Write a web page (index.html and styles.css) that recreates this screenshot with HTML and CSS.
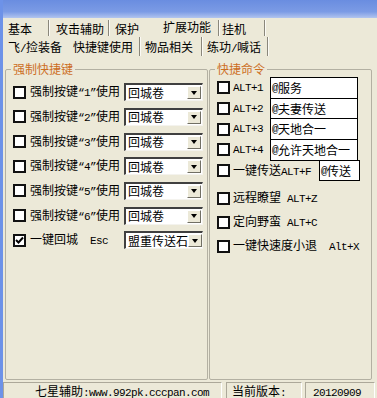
FILE: index.html
```html
<!DOCTYPE html>
<html lang="zh">
<head>
    <meta charset="UTF-8">
    <title>快捷键使用</title>
    <link rel="stylesheet" href="styles.css">
</head>
<body>
    <div class="window">
        <div class="titlebar"></div>
        <div class="tabs">
            <div class="tab-row row1">
                <span class="tab sep tab-basic">基本</span>
                <span class="tab sep tab-attack">攻击辅助</span>
                <span class="tab tab-protect">保护</span>
                <span class="tab sep tab-ext raised">扩展功能</span>
                <span class="tab sep tab-hang">挂机</span>
            </div>
            <div class="tab-row row2">
                <span class="tab tab-fly">飞<span class="en">/</span>捡装备</span>
                <span class="tab sep tab-keys active">快捷键使用</span>
                <span class="tab sep tab-items">物品相关</span>
                <span class="tab sep tab-train">练功<span class="en">/</span>喊话</span>
            </div>
        </div>

        <div class="panel">
            <fieldset class="group group-keys">
                <legend>强制快捷键</legend>
                <div class="key-list">
                    <div class="key-row"><span class="check"></span><span class="key-label">强制按键<span class="en">“1”</span>使用</span><div class="combo"><span class="combo-text">回城卷</span><span class="combo-btn"></span></div></div>
                    <div class="key-row"><span class="check"></span><span class="key-label">强制按键<span class="en">“2”</span>使用</span><div class="combo"><span class="combo-text">回城卷</span><span class="combo-btn"></span></div></div>
                    <div class="key-row"><span class="check"></span><span class="key-label">强制按键<span class="en">“3”</span>使用</span><div class="combo"><span class="combo-text">回城卷</span><span class="combo-btn"></span></div></div>
                    <div class="key-row"><span class="check"></span><span class="key-label">强制按键<span class="en">“4”</span>使用</span><div class="combo"><span class="combo-text">回城卷</span><span class="combo-btn"></span></div></div>
                    <div class="key-row"><span class="check"></span><span class="key-label">强制按键<span class="en">“5”</span>使用</span><div class="combo"><span class="combo-text">回城卷</span><span class="combo-btn"></span></div></div>
                    <div class="key-row"><span class="check"></span><span class="key-label">强制按键<span class="en">“6”</span>使用</span><div class="combo"><span class="combo-text">回城卷</span><span class="combo-btn"></span></div></div>
                    <div class="key-row">
                        <span class="check checked"><svg width="9" height="9" viewBox="0 0 9 9"><polyline points="1,4 3.5,6.5 8,1.5" fill="none" stroke="#000" stroke-width="2"/></svg></span>
                        <span class="key-label">一键回城<span class="en">  Esc</span></span>
                        <div class="combo"><span class="combo-text">盟重传送石</span><span class="combo-btn"></span></div>
                    </div>
                </div>
            </fieldset>

            <fieldset class="group group-cmds">
                <legend>快捷命令</legend>
                <div class="cmd-list">
                    <div class="cmd-row"><span class="check"></span><span class="cmd-label en">ALT+1</span><span class="cmd-box"><span class="en">@</span>服务</span></div>
                    <div class="cmd-row"><span class="check"></span><span class="cmd-label en">ALT+2</span><span class="cmd-box"><span class="en">@</span>夫妻传送</span></div>
                    <div class="cmd-row"><span class="check"></span><span class="cmd-label en">ALT+3</span><span class="cmd-box"><span class="en">@</span>天地合一</span></div>
                    <div class="cmd-row"><span class="check"></span><span class="cmd-label en">ALT+4</span><span class="cmd-box"><span class="en">@</span>允许天地合一</span></div>
                    <div class="cmd-row"><span class="check"></span><span class="cmd-label wide">一键传送<span class="en">ALT+F</span></span><span class="cmd-box small"><span class="en">@</span>传送</span></div>
                </div>
                <div class="opt-list">
                    <div class="opt-row"><span class="check"></span><span>远程瞭望<span class="en"> ALT+Z</span></span></div>
                    <div class="opt-row"><span class="check"></span><span>定向野蛮<span class="en"> ALT+C</span></span></div>
                    <div class="opt-row"><span class="check"></span><span>一键快速度小退<span class="en">  Alt+X</span></span></div>
                </div>
            </fieldset>
        </div>

        <div class="statusbar">
            <div class="status-cell cell-site">七星辅助<span class="en">:www.992pk.cccpan.com</span></div>
            <div class="status-cell cell-label">当前版本<span class="en">:</span></div>
            <div class="status-cell cell-ver"><span class="en">20120909</span></div>
        </div>
    </div>
</body>
</html>
```

FILE: styles.css
```css
* {
    box-sizing: border-box;
}
body {
    margin: 0;
    background: #ece9d8;
    font-family: "Noto Sans CJK SC", "Liberation Sans", sans-serif;
    font-size: 12px;
    line-height: 14px;
    color: #000;
}
.en {
    font-family: "Liberation Mono", monospace;
    font-size: 11px;
    letter-spacing: -0.6px;
    white-space: pre;
}
.window {
    width: 377px;
    height: 398px;
    overflow: hidden;
    border-left: 3px solid #6d92e8;
    display: flex;
    flex-direction: column;
    background: #ece9d8;
}
.titlebar {
    flex: none;
    height: 18px;
    background: linear-gradient(to bottom, #6a8de0 0%, #7b9be5 65%, #b2c5ef 100%);
}

/* tabs */
.tabs {
    flex: none;
}
.tab-row {
    display: flex;
}
.row1 {
    height: 18px;
}
.row2 {
    height: 20px;
}
.tab {
    flex: none;
    white-space: nowrap;
}
.tab.sep {
    border-right: 1px solid #8a877b;
    box-shadow: 1px 0 0 #fbfaf5;
}
.row1 .tab {
    padding-top: 2px;
    margin-top: 2px;
}
.row1 .tab.raised {
    padding-top: 0;
}
.row2 .tab {
    padding-top: 3px;
    margin-top: 1px;
}
.tab-basic { width: 46px; padding-left: 5px; }
.tab-attack { width: 60px; padding-left: 7px; }
.tab-protect { width: 51px; padding-left: 6px; }
.tab-ext { width: 59px; padding-left: 3px; }
.tab-hang { width: 46px; padding-left: 3px; }
.tab-fly { width: 65px; padding-left: 5px; }
.tab-keys { width: 72px; padding-left: 5px; }
.tab-items { width: 62px; padding-left: 5px; }
.tab-train { width: 66px; padding-left: 5px; }

/* main panel */
.panel {
    flex: 1;
    display: flex;
    gap: 1px;
    padding: 6px 0 1px 2px;
}
.group {
    margin: 0;
    padding: 0;
    min-width: 0;
    border: 1px solid #b3b0a2;
    border-radius: 2px;
}
.group legend {
    margin-left: 5px;
    padding: 0 2px;
    color: #cc6e1f;
    line-height: 14px;
}
.group-keys {
    width: 203px;
}
.group-cmds {
    width: 163px;
}

.check {
    flex: none;
    width: 13px;
    height: 13px;
    border: 2px solid #111;
    background: #fff;
    display: flex;
    align-items: center;
    justify-content: center;
}

.key-list {
    padding-top: 4px;
}
.key-row {
    display: flex;
    align-items: center;
    height: 24.67px;
    padding-left: 7px;
}
.key-row .check {
    margin-right: 4px;
}
.key-label {
    flex: none;
    width: 94px;
    white-space: nowrap;
}
.combo {
    flex: none;
    width: 79px;
    height: 18px;
    display: flex;
    align-items: center;
    background: #fff;
    border-style: solid;
    border-width: 2px 1px 1px 2px;
    border-color: #404040 #f4f3ee #f4f3ee #404040;
}
.combo-text {
    flex: 1;
    padding-left: 2px;
    white-space: nowrap;
}
.combo-btn {
    flex: none;
    width: 14px;
    height: 13px;
    margin-right: 1px;
    background: #ece9d8;
    border-style: solid;
    border-width: 1px;
    border-color: #fff #716f64 #716f64 #fff;
    display: flex;
    align-items: center;
    justify-content: center;
}
.combo-btn::after {
    content: "";
    border-left: 3.5px solid transparent;
    border-right: 3.5px solid transparent;
    border-top: 4px solid #000;
}

.cmd-list {
    padding-top: 1px;
}
.cmd-row {
    display: flex;
    align-items: center;
    height: 21.7px;
    padding-left: 7px;
}
.cmd-row + .cmd-row {
    margin-top: -1px;
}
.cmd-row .check,
.opt-row .check {
    margin-right: 3px;
}
.cmd-label {
    flex: none;
    width: 37px;
}
.cmd-label.wide {
    width: 86px;
    white-space: nowrap;
}
.cmd-box {
    flex: none;
    width: 88px;
    height: 100%;
    border: 1px solid #000;
    background: #fff;
    padding-left: 1px;
    display: flex;
    align-items: center;
    white-space: nowrap;
}
.cmd-box.small {
    width: 41px;
}
.opt-list {
    padding-top: 5px;
}
.opt-row {
    display: flex;
    align-items: center;
    height: 24px;
    padding-left: 7px;
    white-space: nowrap;
}

/* status bar */
.statusbar {
    flex: none;
    height: 17px;
    display: flex;
    padding-top: 1px;
}
.status-cell {
    flex: none;
    height: 20px;
    padding-top: 1px;
    border: 1px solid;
    border-color: #aca899 #fff #fff #aca899;
    white-space: nowrap;
    line-height: 13px;
}
.cell-site {
    width: 219px;
    padding-left: 31px;
    margin-right: 4px;
}
.cell-label {
    width: 76px;
    padding-left: 5px;
    margin-right: 3px;
}
.cell-ver {
    width: 70px;
    padding-left: 7px;
}
```
